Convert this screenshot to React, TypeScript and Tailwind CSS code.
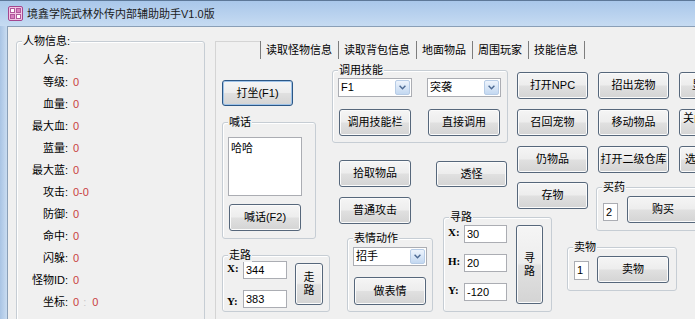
import clsx from "clsx";
import type { ReactNode } from "react";

function Btn({
  children,
  className,
  focus,
}: {
  children: ReactNode;
  className?: string;
  focus?: boolean;
}) {
  return (
    <div
      className={clsx(
        "flex shrink-0 items-center justify-center rounded-[3px] border bg-[linear-gradient(#f5f5f5_0%,#ededed_48%,#e0e0e0_52%,#d4d4d4_100%)] text-[11px] leading-[13px] text-black",
        focus
          ? "border-[#2c5786] shadow-[inset_0_0_0_1px_#9fc3e8]"
          : "border-[#56677b] shadow-[inset_0_0_0_1px_#fbfbfb]",
        className
      )}
    >
      {children}
    </div>
  );
}

function Group({
  title,
  className,
  children,
}: {
  title: string;
  className?: string;
  children?: ReactNode;
}) {
  return (
    <div
      className={clsx(
        "relative shrink-0 rounded-[3px] border border-[#c6cdd4] shadow-[inset_1px_1px_0_#ffffff]",
        className
      )}
    >
      <span className="absolute -top-[8px] left-[5px] bg-[#f0f0f0] px-[1px] text-[11px] leading-[14px] text-black">
        {title}
      </span>
      {children}
    </div>
  );
}

function Combo({ value, className }: { value: string; className?: string }) {
  return (
    <div
      className={clsx(
        "flex h-[19px] w-[74px] shrink-0 items-center border border-[#abadb3] bg-white",
        className
      )}
    >
      <span className="flex-1 pl-[2px] text-[11px] leading-[17px]">{value}</span>
      <span className="mr-[1px] flex h-[15px] w-[15px] items-center justify-center rounded-[2px] border border-[#b7cce6] bg-[linear-gradient(#eef4fc,#c3d8f1)]">
        <svg width="7" height="5" viewBox="0 0 7 5">
          <path d="M0.6 0.8 L3.5 3.8 L6.4 0.8" fill="none" stroke="#4d6a93" strokeWidth="1.4" />
        </svg>
      </span>
    </div>
  );
}

function Field({ value, className }: { value: string; className?: string }) {
  return (
    <div
      className={clsx(
        "flex shrink-0 items-center border border-[#abadb3] bg-white pl-[2px] text-[11px] leading-[13px]",
        className
      )}
    >
      {value}
    </div>
  );
}

const stats: [string, ReactNode][] = [
  ["人名:", ""],
  ["等级:", "0"],
  ["血量:", "0"],
  ["最大血:", "0"],
  ["蓝量:", "0"],
  ["最大蓝:", "0"],
  ["攻击:", "0-0"],
  ["防御:", "0"],
  ["命中:", "0"],
  ["闪躲:", "0"],
  ["怪物ID:", "0"],
  [
    "坐标:",
    <>
      0<span className="mx-[4px] text-[#c8c8c8]">:</span>
      <span className="ml-[2px]">0</span>
    </>,
  ],
];

const tabs = ["读取怪物信息", "读取背包信息", "地面物品", "周围玩家", "技能信息"];

export default function App() {
  return (
    <div className="flex h-[319px] w-[695px] flex-col overflow-hidden font-['Liberation_Sans','Noto_Sans_CJK_SC',sans-serif] text-black">
      {/* Title bar */}
      <div className="flex h-[26px] shrink-0 items-center border-t border-[#5d7898] bg-[linear-gradient(#a9c7ea,#c6dbf2)] pl-[8px]">
        <svg width="15" height="15" viewBox="0 0 15 15">
          <rect x="0.5" y="0.5" width="14" height="14" rx="1.5" fill="#f3c6e4" stroke="#a3478f" />
          <rect x="2.5" y="2.5" width="4" height="4" fill="#ffffff" stroke="#b0589c" />
          <rect x="8.5" y="2.5" width="4" height="4" fill="#d87fc0" stroke="#b0589c" />
          <rect x="2.5" y="8.5" width="4" height="4" fill="#d87fc0" stroke="#b0589c" />
          <rect x="8.5" y="8.5" width="4" height="4" fill="#ffffff" stroke="#b0589c" />
        </svg>
        <span className="ml-[4px] text-[11px] leading-[14px] text-[#1b1b1b]">
          境鑫学院武林外传内部辅助助手V1.0版
        </span>
      </div>

      <div className="flex flex-1">
        {/* left window frame */}
        <div className="w-[8px] shrink-0 border-r border-[#8a9fb7] bg-[linear-gradient(90deg,#a9c4e4,#c9dcf1)]" />

        {/* client area */}
        <div className="flex min-w-0 flex-1 items-start border-t border-[#8a9fb7] bg-[#f0f0f0]">
          {/* character info */}
          <Group title="人物信息:" className="ml-[8px] mt-[14px] h-[300px] w-[189px]">
            <div className="mt-[7px] flex flex-col">
              {stats.map(([label, value]) => (
                <div key={label} className="flex h-[22px] items-center text-[11px]">
                  <span className="w-[51px] text-right">{label}</span>
                  <span className="ml-[5px] text-[#c9403f]">{value}</span>
                </div>
              ))}
            </div>
          </Group>

          {/* tab area */}
          <div className="ml-[10px] mt-[14px] flex min-w-0 flex-1 flex-col self-stretch border-l border-[#d4d4d4]">
            <div className="flex h-[18px] shrink-0 text-[11px] leading-[18px]">
              <div className="w-[44px] shrink-0 border-t border-[#d4d4d4]" />
              {tabs.map((t, i) => (
                <div
                  key={t}
                  className={clsx(
                    "shrink-0 border-l border-[#7d7d7d] pl-[5px] pr-[6px]",
                    i === tabs.length - 1 && "border-r"
                  )}
                >
                  {t}
                </div>
              ))}
            </div>

            <div className="flex items-start">
              {/* column A */}
              <div className="ml-[6px] flex w-[108px] shrink-0 flex-col items-start">
                <Btn focus className="mt-[21px] h-[26px] w-[71px]">
                  打坐(F1)
                </Btn>
                <Group title="喊话" className="mt-[16px] h-[117px] w-[94px]">
                  <Field value="" className="ml-[5px] mt-[14px] h-[59px] w-[74px]" />
                  <div className="absolute left-[8px] top-[17px] text-[11px]">哈哈</div>
                  <Btn className="ml-[6px] mt-[8px] h-[27px] w-[72px]">喊话(F2)</Btn>
                </Group>
                <Group title="走路" className="mt-[16px] flex h-[57px] w-[108px] items-start">
                  <div className="ml-[4px] flex flex-col">
                    <div className="mt-[5px] flex items-start">
                      <span className="w-[16px] font-['Liberation_Serif'] text-[11px] font-bold leading-[14px]">X:</span>
                      <Field value="344" className="h-[18px] w-[44px]" />
                    </div>
                    <div className="mt-[11px] flex items-end">
                      <span className="w-[16px] font-['Liberation_Serif'] text-[11px] font-bold leading-[14px]">Y:</span>
                      <Field value="383" className="h-[18px] w-[44px]" />
                    </div>
                  </div>
                  <Btn className="ml-[8px] mt-[7px] h-[42px] w-[28px] flex-col">
                    <span>走</span>
                    <span>路</span>
                  </Btn>
                </Group>
              </div>

              {/* column B */}
              <div className="ml-[2px] flex w-[176px] shrink-0 flex-col">
                <Group title="调用技能" className="mt-[11px] h-[73px] w-[176px]">
                  <div className="mt-[7px] flex">
                    <Combo value="F1" className="ml-[5px]" />
                    <Combo value="突袭" className="ml-[15px]" />
                  </div>
                  <div className="mt-[12px] flex">
                    <Btn className="ml-[6px] h-[27px] w-[72px]">调用技能栏</Btn>
                    <Btn className="ml-[17px] h-[27px] w-[72px]">直接调用</Btn>
                  </div>
                </Group>
                <div className="flex items-start">
                  <div className="flex w-[102px] shrink-0 flex-col items-start">
                    <Btn className="ml-[7px] mt-[17px] h-[27px] w-[72px]">拾取物品</Btn>
                    <Btn className="ml-[7px] mt-[10px] h-[27px] w-[72px]">普通攻击</Btn>
                    <Group title="表情动作" className="ml-[15px] mt-[14px] h-[74px] w-[86px]">
                      <Combo value="招手" className="ml-[5px] mt-[8px]" />
                      <Btn className="ml-[6px] mt-[11px] h-[28px] w-[72px]">做表情</Btn>
                    </Group>
                  </div>
                  <div className="flex shrink-0 flex-col items-start">
                    <Btn className="ml-[2px] mt-[18px] h-[26px] w-[71px]">透怪</Btn>
                    <Group title="寻路" className="ml-[9px] mt-[30px] flex h-[95px] w-[109px] items-start">
                      <div className="ml-[4px] mt-[7px] flex flex-col gap-[11px]">
                        {[
                          ["X:", "30"],
                          ["H:", "20"],
                          ["Y:", "-120"],
                        ].map(([l, v]) => (
                          <div key={l} className="flex items-start">
                            <span className="w-[16px] font-['Liberation_Serif'] text-[11px] font-bold leading-[14px]">{l}</span>
                            <Field value={v} className="h-[18px] w-[43px]" />
                          </div>
                        ))}
                      </div>
                      <Btn className="ml-[9px] mt-[7px] h-[79px] w-[27px] flex-col">
                        <span>寻</span>
                        <span>路</span>
                      </Btn>
                    </Group>
                  </div>
                </div>
              </div>

              {/* column C */}
              <div className="ml-[9px] flex shrink-0 flex-col items-start">
                <div className="mt-[13px] grid grid-cols-[71px_71px_71px] gap-x-[10px] gap-y-[10px]">
                  <Btn className="h-[27px]">打开NPC</Btn>
                  <Btn className="h-[27px]">招出宠物</Btn>
                  <Btn className="h-[27px] justify-start pl-[12px] text-[#a8a8a8]">显示全部</Btn>
                  <Btn className="h-[27px]">召回宠物</Btn>
                  <Btn className="h-[27px]">移动物品</Btn>
                  <Btn className="h-[27px] items-start justify-start pl-[3px] pt-[2px]">关闭所有窗口</Btn>
                  <Btn className="h-[27px]">仍物品</Btn>
                  <Btn className="h-[27px]">打开二级仓库</Btn>
                  <Btn className="h-[27px] justify-start pl-[5px]">选择怪物</Btn>
                </div>
                <div className="mt-[9px] flex items-start">
                  <Btn className="h-[27px] w-[71px]">存物</Btn>
                  <Group title="买药" className="ml-[8px] mt-[5px] flex h-[44px] w-[110px] items-start">
                    <Field value="2" className="ml-[6px] mt-[15px] h-[18px] w-[15px]" />
                    <Btn className="ml-[9px] mt-[8px] h-[27px] w-[72px]">购买</Btn>
                  </Group>
                </div>
                <Group title="卖物" className="ml-[50px] mt-[16px] flex h-[44px] w-[110px] items-start">
                  <Field value="1" className="ml-[6px] mt-[13px] h-[19px] w-[15px]" />
                  <Btn className="ml-[8px] mt-[8px] h-[27px] w-[72px]">卖物</Btn>
                </Group>
              </div>
            </div>
          </div>
        </div>
      </div>
    </div>
  );
}
